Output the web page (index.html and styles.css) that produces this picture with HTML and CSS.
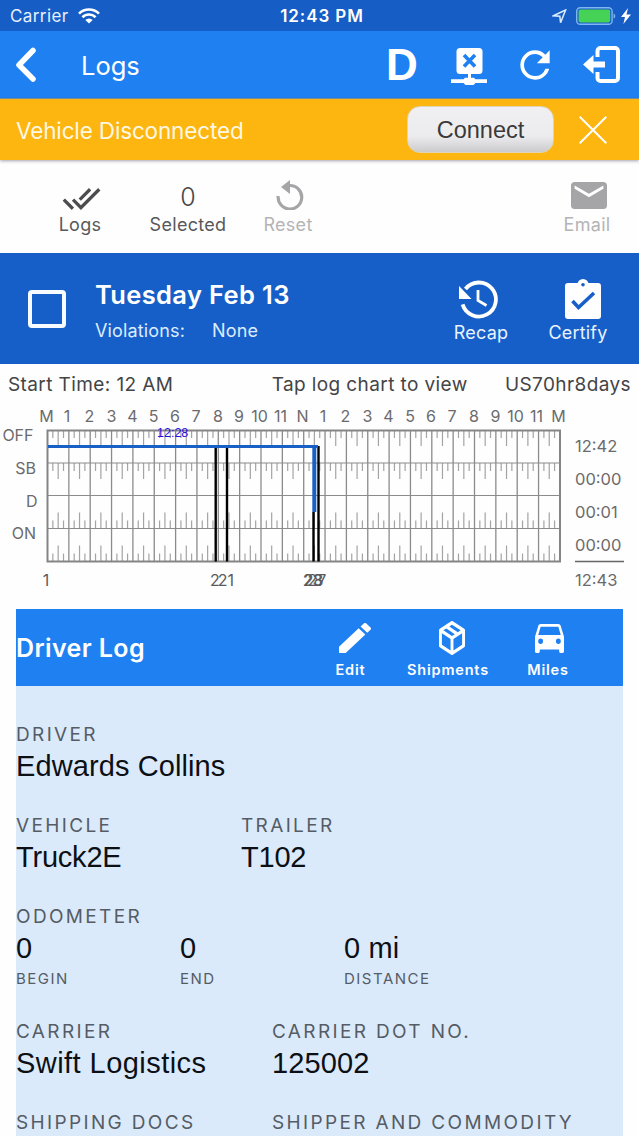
FILE: index.html
```html
<!DOCTYPE html>
<html lang="en">
	<head>
		<meta charset="UTF-8">
		<link rel="stylesheet" href="styles.css">
		<title>Logs</title>
	</head>
	<body>
		<div class="statusbar">
			<div class="status-left">
				<span>Carrier</span>
				<svg class="wifi" viewBox="0 0 22 16" fill="none" stroke="#fff" stroke-width="2.7">
					<path d="M1 5.6a14.3 14.3 0 0 1 20 0M4.4 9.2a9.4 9.4 0 0 1 13.2 0"/>
					<path d="M11 15.6L7.3 12a5.3 5.3 0 0 1 7.4 0z" fill="#fff" stroke="none"/>
				</svg>
			</div>
			<span class="clock">12:43 PM</span>
			<div class="status-right">
				<svg class="location" viewBox="0 0 15 15" fill="none" stroke="#d9ecff" stroke-width="1.5"><path d="M1.4 6.8L13.6 1 8.6 13.6 7.8 7.2z"/></svg>
				<svg class="battery" viewBox="0 0 41 18">
					<rect x=".7" y=".7" width="35.4" height="16.6" rx="3.6" fill="none" stroke="#7fb5f2" stroke-width="1.4"/>
					<rect x="2.6" y="2.6" width="31.6" height="12.8" rx="1.8" fill="#45d257"/>
					<path d="M37.6 6.4c2.2 .8 2.2 4.4 0 5.2z" fill="#7fb5f2"/>
				</svg>
				<svg class="bolt" viewBox="0 0 10 16" fill="#fff"><path d="M7 0L0 9h4l-1.6 7L10 6.4H5.5z"/></svg>
			</div>
		</div>
		<div class="navbar">
			<svg class="back" viewBox="0 0 22 36" fill="none" stroke="#fff" stroke-width="5.5" stroke-linecap="round" stroke-linejoin="round"><path d="M18 3.5L4 18l14 14"/></svg>
			<span class="nav-title">Logs</span>
			<span class="duty">D</span>
			<svg class="vehicle" viewBox="0 0 36 37" fill="#fff">
				<rect x="5.5" y="0" width="26" height="26" rx="3.5"/>
				<path d="M17 25h3v6h-3z"/>
				<path d="M0 31.3h12.5l1.5-1.5h9l1.5 1.5H36v3.7H24.5L22.5 37h-8l-2-2H0z"/>
				<path d="M13 7l11 11.5M24 7L13 18.5" stroke="#1f80f2" stroke-width="3.6"/>
			</svg>
			<svg class="refresh" viewBox="0 0 24 24" fill="#fff"><path d="M17.65 6.35A7.958 7.958 0 0 0 12 4a8 8 0 0 0-8 8 8 8 0 0 0 8 8c3.73 0 6.84-2.55 7.73-6h-2.08A5.99 5.99 0 0 1 12 18a6 6 0 0 1-6-6 6 6 0 0 1 6-6c1.66 0 3.14.69 4.22 1.78L13 11h7V4l-2.35 2.35z"/></svg>
			<svg class="logout" viewBox="0 0 37 37" fill="none" stroke="#fff" stroke-width="4">
				<path d="M14.5 11V5a3 3 0 0 1 3-3H32a3 3 0 0 1 3 3v27a3 3 0 0 1-3 3H17.5a3 3 0 0 1-3-3v-6"/>
				<path d="M0 18.5L10.5 9v6.5H22v6H10.5V28z" fill="#fff" stroke="none"/>
			</svg>
		</div>
		<div class="alert">
			<span class="alert-text">Vehicle Disconnected</span>
			<button class="connect">Connect</button>
			<svg class="close" viewBox="0 0 28 28" fill="none" stroke="#fff" stroke-width="2"><path d="M.7 .7l26.6 26.6M27.3 .7L.7 27.3"/></svg>
		</div>
		<div class="toolbar">
			<div class="tool tool-logs">
				<svg class="checks" viewBox="0 0 24 24" fill="#4c4c4e"><path d="M.41 13.41L6 19l1.41-1.42L1.83 12M22.24 5.58L11.66 16.17 7.5 12l-1.43 1.41L11.66 19l12-12M18 7l-1.41-1.42-6.35 6.35 1.42 1.41L18 7z"/></svg>
				<span>Logs</span>
			</div>
			<div class="tool tool-selected">
				<span class="count">0</span>
				<span>Selected</span>
			</div>
			<div class="tool tool-reset">
				<svg class="reset" viewBox="0 0 28 30"><path d="M2.2 16A11.8 11.8 0 1 0 14 5.5" fill="none" stroke="#a5a4a6" stroke-width="3.2"/><path d="M14 0v14L5 7z" fill="#a5a4a6"/></svg>
				<span>Reset</span>
			</div>
			<div class="tool tool-email">
				<svg class="mail" viewBox="2 4 20 16" preserveAspectRatio="none" fill="#a5a4a6"><path d="M20 4H4c-1.1 0-2 .9-2 2v12c0 1.1.9 2 2 2h16c1.1 0 2-.9 2-2V6c0-1.1-.9-2-2-2zm0 4l-8 5-8-5V6l8 5 8-5v2z"/></svg>
				<span>Email</span>
			</div>
		</div>
		<div class="day">
			<div class="checkbox"></div>
			<div class="day-info">
				<div class="date">Tuesday Feb 13</div>
				<div class="violations"><span>Violations:</span><span>None</span></div>
			</div>
			<div class="day-action recap">
				<svg viewBox="0 0 40 40" fill="none" stroke="#fff">
					<path d="M3.6 25.4A17 17 0 1 0 6.5 10" stroke-width="3.8"/>
					<path d="M0 7v13h12.5z" fill="#fff" stroke="none"/>
					<path d="M19 11v10.5l8.5 5" stroke-width="2.8"/>
				</svg>
				<span>Recap</span>
			</div>
			<div class="day-action certify">
				<svg viewBox="0 0 36 40">
					<rect x="0" y="4" width="36" height="36" rx="3" fill="#fff"/>
					<circle cx="18" cy="5.5" r="5.5" fill="#fff"/>
					<circle cx="18" cy="5.8" r="1.8" fill="#175fc8"/>
					<path d="M7.5 22l6 6.500L29 14" fill="none" stroke="#175fc8" stroke-width="3.6"/>
				</svg>
				<span>Certify</span>
			</div>
		</div>
		<div class="info">
			<span class="start">Start Time: 12 AM</span>
			<span class="hint">Tap log chart to view</span>
			<span class="rule">US70hr8days</span>
		</div>
		<svg class="chart" viewBox="0 400 639 209">
			<defs>
				<!-- one hour: quarter ticks for the four duty rows -->
				<g id="hour">
					<path d="M5.34 430v8M10.68 430v16M16.02 430v8M5.34 463v8M10.68 463v16M16.02 463v8M5.34 528.5v-8M10.68 528.5v-16M16.02 528.5v-8M5.34 561.5v-8M10.68 561.5v-16M16.02 561.5v-8" stroke="#a4a4a6" stroke-width="1.2"/>
					<path d="M21.35 430v132" stroke="#8b8b8d" stroke-width="1.3"/>
				</g>
				<g id="hours">
					<use href="#hour"/>
					<use href="#hour" x="21.35"/>
					<use href="#hour" x="42.7"/>
					<use href="#hour" x="64.05"/>
				</g>
			</defs>
			<g class="hour-labels">
				<text x="46.5" y="422">M</text>
				<text x="67" y="422">1</text>
				<text x="89.5" y="422">2</text>
				<text x="111.5" y="422">3</text>
				<text x="132.5" y="422">4</text>
				<text x="153.5" y="422">5</text>
				<text x="175" y="422">6</text>
				<text x="196" y="422">7</text>
				<text x="218" y="422">8</text>
				<text x="239" y="422">9</text>
				<text x="259.5" y="422">10</text>
				<text x="280.5" y="422">11</text>
				<text x="302.5" y="422">N</text>
				<text x="323" y="422">1</text>
				<text x="345.5" y="422">2</text>
				<text x="367.5" y="422">3</text>
				<text x="388.5" y="422">4</text>
				<text x="410" y="422">5</text>
				<text x="431" y="422">6</text>
				<text x="452" y="422">7</text>
				<text x="474" y="422">8</text>
				<text x="495.5" y="422">9</text>
				<text x="515.5" y="422">10</text>
				<text x="536.5" y="422">11</text>
				<text x="558.5" y="422">M</text>
			</g>
			<g class="row-labels">
				<text x="33.5" y="441">OFF</text>
				<text x="36" y="474">SB</text>
				<text x="37.5" y="507">D</text>
				<text x="36" y="539">ON</text>
			</g>
			<use href="#hours" x="47.5"/>
			<use href="#hours" x="132.9"/>
			<use href="#hours" x="218.3"/>
			<use href="#hours" x="303.7"/>
			<use href="#hours" x="389.1"/>
			<use href="#hours" x="474.5"/>
			<path d="M47 463h513M47 495.5h513M47 528.5h513" stroke="#8b8b8d" stroke-width="1.2"/>
			<rect x="47.5" y="430.5" width="512.5" height="131" fill="none" stroke="#858587" stroke-width="2"/>
			<text class="duration" x="157" y="437">12:28</text>
			<path d="M215.7 446v115.5M227 446v115.5M313.5 512v49.5M318.5 446v115.5" stroke="#000" stroke-width="2.4"/>
			<path d="M48 446.5h270" stroke="#1760c6" stroke-width="3"/>
			<path d="M314.3 446v66" stroke="#1760c6" stroke-width="4"/>
			<g class="remarks">
				<text x="46" y="586">1</text>
				<text x="215" y="586">2</text>
				<text x="226" y="586">21</text>
				<text x="312.5" y="586">23</text>
				<text x="313.5" y="586">28</text>
				<text x="317" y="586">27</text>
			</g>
			<g class="totals">
				<text x="575" y="452">12:42</text>
				<text x="575" y="485">00:00</text>
				<text x="575" y="518">00:01</text>
				<text x="575" y="551">00:00</text>
				<text x="575" y="586">12:43</text>
			</g>
			<path d="M575 561.5h49" stroke="#666" stroke-width="1.3"/>
		</svg>
		<div class="log">
			<div class="log-head">
				<span class="log-title">Driver Log</span>
				<div class="log-action edit">
					<svg width="32" height="30" viewBox="3 3 18 18" preserveAspectRatio="none" fill="#fff"><path d="M3 17.25V21h3.75L17.81 9.94l-3.75-3.75L3 17.25zM20.71 7.04a.996.996 0 0 0 0-1.41l-2.34-2.34a.996.996 0 0 0-1.41 0l-1.83 1.83 3.75 3.75 1.83-1.83z"/></svg>
					<span>Edit</span>
				</div>
				<div class="log-action shipments">
					<svg width="26" height="34" viewBox="3 2 18 20" preserveAspectRatio="none" fill="#fff"><path d="M21 16.5c0 .38-.21.71-.53.88l-7.9 4.44c-.16.12-.36.18-.57.18s-.41-.06-.57-.18l-7.9-4.44A.991.991 0 0 1 3 16.5v-9c0-.38.21-.71.53-.88l7.9-4.44c.16-.12.36-.18.57-.18s.41.06.57.18l7.9 4.44c.32.17.53.5.53.88v9M12 4.15l-1.89 1.07L16 8.61l1.96-1.11L12 4.15M6.04 7.5L12 10.85l1.96-1.1-5.88-3.4L6.04 7.5M5 15.91l6 3.38v-6.71L5 9.21v6.7m14 0v-6.7l-6 3.37v6.71l6-3.38z"/></svg>
					<span>Shipments</span>
				</div>
				<div class="log-action miles">
					<svg width="29" height="29" viewBox="3 5 18 16" preserveAspectRatio="none" fill="#fff"><path d="M18.92 6.01C18.72 5.42 18.16 5 17.5 5h-11c-.66 0-1.21.42-1.42 1.01L3 12v8c0 .55.45 1 1 1h1c.55 0 1-.45 1-1v-1h12v1c0 .55.45 1 1 1h1c.55 0 1-.45 1-1v-8l-2.08-5.99zM6.5 16a1.5 1.5 0 1 1 0-3 1.5 1.5 0 0 1 0 3zm11 0a1.5 1.5 0 1 1 0-3 1.5 1.5 0 0 1 0 3zM5 11l1.5-4.5h11L19 11H5z"/></svg>
					<span>Miles</span>
				</div>
			</div>
			<div class="log-body">
				<div class="fields">
					<div class="field">
						<div class="label">DRIVER</div>
						<div class="value">Edwards Collins</div>
					</div>
				</div>
				<div class="fields vehicle-fields">
					<div class="field">
						<div class="label">VEHICLE</div>
						<div class="value unit">Truck2E</div>
					</div>
					<div class="field">
						<div class="label">TRAILER</div>
						<div class="value unit">T102</div>
					</div>
				</div>
				<div class="odometer">
					<div class="label">ODOMETER</div>
					<div class="fields odometer-fields">
						<div class="field">
							<div class="value">0</div>
							<div class="sub">BEGIN</div>
						</div>
						<div class="field">
							<div class="value">0</div>
							<div class="sub">END</div>
						</div>
						<div class="field">
							<div class="value">0 mi</div>
							<div class="sub">DISTANCE</div>
						</div>
					</div>
				</div>
				<div class="fields carrier-fields">
					<div class="field">
						<div class="label">CARRIER</div>
						<div class="value company">Swift Logistics</div>
					</div>
					<div class="field">
						<div class="label">CARRIER DOT NO.</div>
						<div class="value">125002</div>
					</div>
				</div>
				<div class="fields carrier-fields">
					<div class="label">SHIPPING DOCS</div>
					<div class="label">SHIPPER AND COMMODITY</div>
				</div>
			</div>
		</div>
	</body>
</html>
```

FILE: styles.css
```css
* {
	box-sizing: border-box
}

body {
	margin: 0;
	width: 639px;
	height: 1136px;
	overflow: hidden;
	background: #fefefe;
	font-family: Inter, "Liberation Sans", sans-serif;
	white-space: nowrap
}

svg {
	display: block;
	flex: none
}

.statusbar {
	display: grid;
	grid-template-columns: 1fr auto 1fr;
	align-items: center;
	height: 31px;
	padding: 1px 8px 0 10px;
	background: #175dc6;
	color: white
}

.status-left,
.status-right {
	display: flex;
	align-items: center
}

.status-left {
	gap: 9px;
	font-size: 17px;
	letter-spacing: 0.4px;
	color: #e4f1ff
}

.wifi {
	width: 22px;
	height: 16px
}

.clock {
	margin-left: 3px;
	font-size: 17px;
	font-weight: 600;
	letter-spacing: 0.9px
}

.status-right {
	justify-content: flex-end
}

.location {
	width: 15px;
	height: 15px;
	margin-right: 9px
}

.battery {
	width: 41px;
	height: 18px;
	margin-right: 4px
}

.bolt {
	width: 10px;
	height: 16px
}

.navbar {
	display: flex;
	align-items: center;
	height: 68px;
	padding: 0 19px 0 15px;
	background: #1f80f2;
	border-bottom: 1px solid #7b93a0;
	color: white
}

.back {
	width: 22px;
	height: 36px
}

.nav-title {
	flex: 1;
	margin-left: 44px;
	font-size: 25.5px;
	font-weight: 400;
	padding-top: 1px
}

.duty {
	width: 65px;
	font-family: "Liberation Sans", sans-serif;
	font-size: 44px;
	font-weight: bold;
	line-height: 60px
}

.vehicle {
	width: 36px;
	height: 37px;
	margin-top: 3px
}

.refresh {
	width: 44px;
	height: 44px;
	margin-left: 26px
}

.logout {
	width: 37px;
	height: 37px;
	margin-left: 26px
}

.alert {
	display: flex;
	align-items: center;
	height: 61px;
	padding: 0 32px 0 16px;
	background: #fdb510;
	box-shadow: 0 1px 3px rgba(80, 70, 90, 0.5)
}

.alert-text {
	flex: 1;
	padding-top: 1px;
	font-size: 22.5px;
	font-weight: 400;
	letter-spacing: -0.15px;
	color: #fff8e2
}

.connect {
	width: 147px;
	height: 47px;
	padding: 1px 0 0;
	border: 1px solid #e0d4b8;
	border-radius: 13px;
	background: linear-gradient(#f0f0f2, #ececee 65%, #cbcbcd);
	font-family: "Liberation Sans", sans-serif;
	font-size: 23.5px;
	color: #3a3a3a
}

.close {
	width: 28px;
	height: 28px;
	margin-left: 25px
}

.toolbar {
	display: flex;
	height: 93px;
	padding: 17px 21px 0 50px;
	font-size: 18px;
	line-height: 22px;
	letter-spacing: 0.3px;
	color: #58585a
}

.tool {
	display: grid;
	grid-template-rows: 36px 23px;
	justify-items: center;
	align-items: center
}

.tool-logs {
	width: 60px
}

.tool-selected {
	width: 80px;
	margin-left: 38px
}

.tool-reset {
	width: 60px;
	margin-left: 30px;
	color: #b4b4b6
}

.tool-email {
	width: 62px;
	margin-left: auto;
	color: #b4b4b6
}

.checks {
	width: 39px;
	height: 39px;
	margin: 7px 0 0 3px
}

.count {
	padding-top: 4px;
	font-size: 25px;
	font-weight: 300;
	color: #48484a
}

.reset {
	width: 28px;
	height: 30px;
	margin: -1px 0 0 4px
}

.mail {
	width: 36px;
	height: 27px;
	margin-left: 4px
}

.day {
	display: flex;
	height: 111px;
	padding: 0 30px 0 28px;
	background: #175fc8;
	color: white
}

.checkbox {
	width: 38px;
	height: 38px;
	margin-top: 37px;
	border: 4px solid #f7fbff;
	border-radius: 4px
}

.day-info {
	flex: 1;
	margin-left: 29px;
	padding-top: 27px
}

.date {
	font-size: 25.5px;
	font-weight: 600;
	line-height: 30px;
	letter-spacing: 0.35px
}

.violations {
	display: flex;
	gap: 27px;
	margin-top: 9px;
	font-size: 18px;
	line-height: 23px;
	letter-spacing: 0.15px;
	color: #dcecff
}

.day-action {
	display: grid;
	grid-template-rows: 41px 26px;
	justify-items: center;
	align-items: center;
	margin-top: 25px;
	height: 67px;
	font-size: 18px;
	letter-spacing: 0.2px;
	color: #e8f3ff
}

.day-action svg {
	height: 40px
}

.recap {
	width: 60px;
	margin-right: 36px
}

.recap svg {
	margin-right: 4px
}

.certify {
	width: 62px
}

.certify svg {
	margin-left: 9px
}

.info {
	display: flex;
	justify-content: space-between;
	height: 36px;
	padding: 0 8px;
	font-size: 19px;
	line-height: 41px;
	letter-spacing: 0.4px;
	color: #444446
}

.hint {
	margin-left: 61px
}

.chart {
	width: 639px;
	height: 209px
}

.chart text {
	font-size: 16px;
	fill: #6b6b6d
}

.hour-labels text,
.remarks text {
	text-anchor: middle
}

.row-labels text {
	text-anchor: end
}

.chart .remarks text {
	fill: #5b5b5d
}

.chart .totals text {
	font-size: 16.5px
}

.chart .duration {
	font-family: "Liberation Sans", sans-serif;
	font-size: 12.5px;
	fill: #2510e0
}

.log {
	width: 607px;
	height: 527px;
	margin-left: 16px;
	background: #dbeafb
}

.log-head {
	display: flex;
	height: 77px;
	padding-right: 54px;
	background: #1f80f2;
	color: white
}

.log-title {
	flex: 1;
	font-size: 25px;
	font-weight: 600;
	line-height: 78px;
	letter-spacing: 0.4px
}

.log-action {
	display: grid;
	grid-template-rows: 38px 24px;
	justify-items: center;
	align-items: center;
	height: 62px;
	margin-top: 10px;
	font-size: 14.5px;
	font-weight: 600;
	letter-spacing: 0.8px
}

.edit {
	width: 32px
}

.edit svg {
	margin-left: 9px
}

.shipments {
	width: 84px;
	margin: 10px 37px 0 44px
}

.shipments svg {
	margin-left: 8px
}

.miles {
	width: 42px
}

.miles svg {
	margin-left: 2px
}

.log-body {
	padding-top: 34px
}

.fields {
	display: grid;
	margin-bottom: 29px
}

.vehicle-fields {
	grid-template-columns: 225px 1fr
}

.odometer {
	margin-bottom: 23px
}

.odometer-fields {
	grid-template-columns: 164px 164px 1fr;
	margin: 0
}

.carrier-fields {
	grid-template-columns: 256px 1fr
}

.label {
	font-size: 19px;
	line-height: 30px;
	letter-spacing: 2.35px;
	color: #555c64
}

.value {
	font-family: "Liberation Sans", sans-serif;
	font-size: 29px;
	line-height: 32px;
	letter-spacing: 0.1px;
	color: #0c1014
}

.unit {
	letter-spacing: -0.2px
}

.company {
	letter-spacing: 0.45px
}

.sub {
	font-size: 15px;
	line-height: 29px;
	margin-bottom: 1px;
	letter-spacing: 1.5px;
	color: #555c64
}
```
